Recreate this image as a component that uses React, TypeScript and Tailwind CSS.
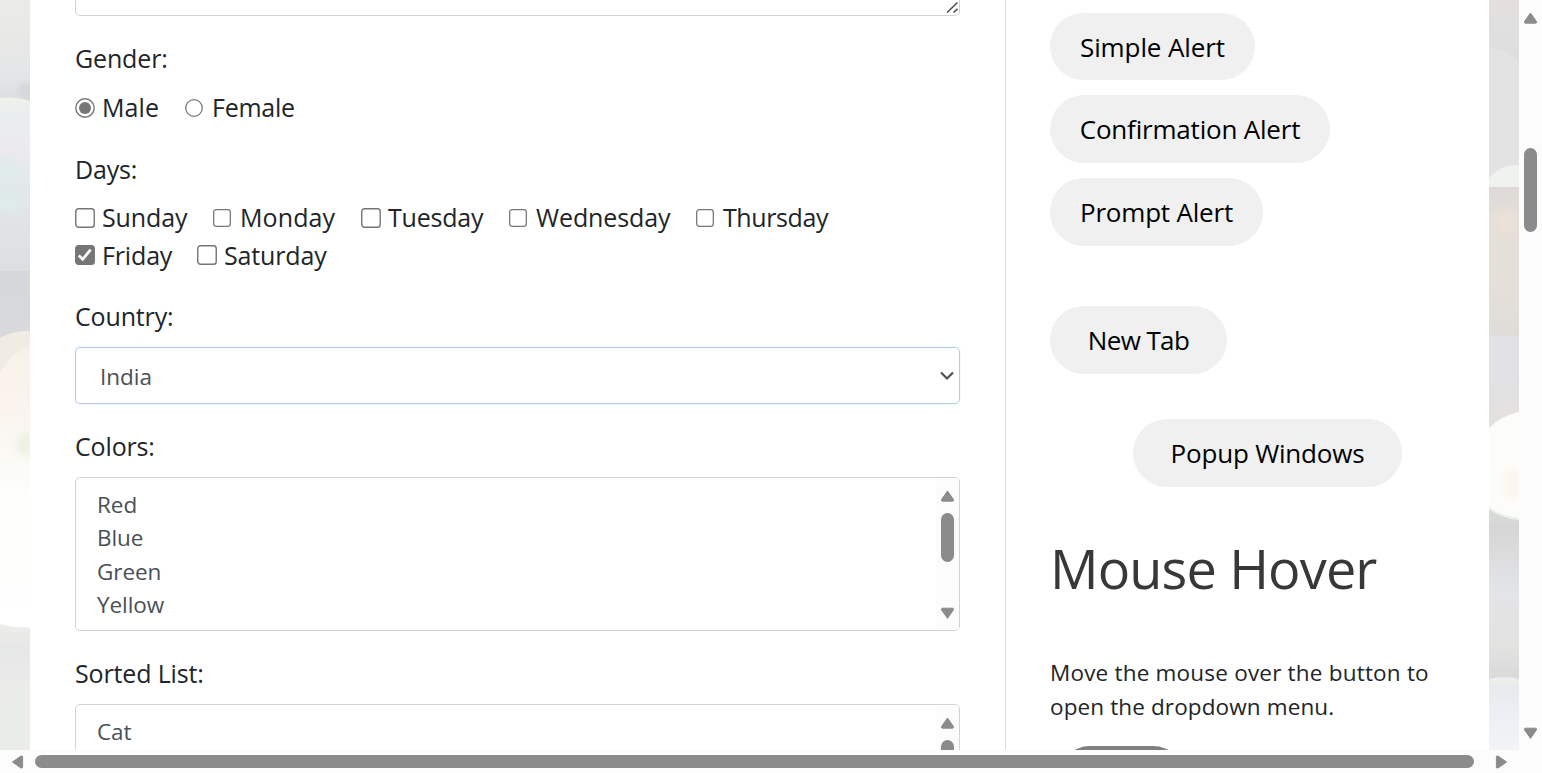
import React from "react";

const arrowPaths = {
  up: "M8 3 L14 11.6 Q14.4 13.2 13 13.2 H3 Q1.6 13.2 2 11.6 Z",
  down: "M8 13.4 L2 4.8 Q1.6 3.2 3 3.2 H13 Q14.4 3.2 14 4.8 Z",
  left: "M3.4 8 L12 2 Q13.6 1.6 13.6 3 V13 Q13.6 14.4 12 14 Z",
  right: "M13.6 8 L5 2 Q3.4 1.6 3.4 3 V13 Q3.4 14.4 5 14 Z",
};

function Arrow({ dir, className = "" }: { dir: keyof typeof arrowPaths; className?: string }) {
  return (
    <svg viewBox="0 0 16 16" className={`block h-4 w-4 shrink-0 ${className}`} fill="#8b8b8b">
      <path d={arrowPaths[dir]} stroke="#8b8b8b" strokeWidth="1" strokeLinejoin="round" />
    </svg>
  );
}

function Box({ size, checked = false }: { size: number; checked?: boolean }) {
  return (
    <svg width={size} height={size} viewBox="0 0 20 20" className="mb-px block shrink-0">
      <rect x="0.75" y="0.75" width="18.5" height="18.5" rx="2.8" fill={checked ? "#767676" : "#fff"} stroke="#767676" strokeWidth="1.4" />
      {checked && <path d="M3.8 10.6 L7.7 14.3 L15.6 4.6" fill="none" stroke="#fff" strokeWidth="2.7" />}
    </svg>
  );
}

function Radio({ size, checked = false }: { size: number; checked?: boolean }) {
  return (
    <svg width={size} height={size} viewBox="0 0 20 20" className="mb-px block shrink-0">
      <circle cx="10" cy="10" r="9.2" fill="#fff" stroke="#767676" strokeWidth="1.4" />
      {checked && <circle cx="10" cy="10" r="6" fill="#767676" />}
    </svg>
  );
}

function Choice({ label, width, text = "tracking-[-0.1px]", control }: { label: string; width: string; text?: string; control: React.ReactNode }) {
  return (
    <label className={`flex h-[38px] shrink-0 items-center whitespace-nowrap ${width}`}>
      <span className="flex w-[27px] shrink-0">{control}</span>
      <span className={text}>{label}</span>
    </label>
  );
}

function FieldLabel({ children, className }: { children: React.ReactNode; className: string }) {
  return <div className={`h-[38px] shrink-0 leading-[38px] tracking-[-0.15px] ${className}`}>{children}</div>;
}

function ListBox({ items }: { items: string[] }) {
  return (
    <div className="mt-[12px] flex h-[154px] w-[885px] shrink-0 overflow-hidden rounded-[5px] border border-[#ced4da]">
      <div className="flex-1 overflow-hidden pl-[21px] pt-[10px] text-[22.5px] tracking-[-0.05px] text-[#495057]">
        {items.map((item, i) => (
          <div key={i} className="h-[33.3px] leading-[33.3px]">{item}</div>
        ))}
      </div>
      <div className="flex w-[23px] flex-col items-center bg-[#fcfcfc] pt-[10px]">
        <Arrow dir="up" className="-translate-x-[0.5px]" />
        <div className="mr-px mt-[9px] h-[49px] w-[13px] shrink-0 rounded-full bg-[#8b8b8b]" />
        <Arrow dir="down" className="mt-[43px] -translate-x-[0.5px]" />
      </div>
    </div>
  );
}

function Pill({ label, className }: { label: string; className: string }) {
  return (
    <button className={`flex shrink-0 items-center justify-center whitespace-nowrap rounded-full bg-[#f0f0f0] text-[26px] text-black ${className}`}>
      {label}
    </button>
  );
}

function LeftBackdrop() {
  return (
    <svg viewBox="0 0 30 750" className="block h-[750px] w-[30px] shrink-0">
      <defs>
        <linearGradient id="leftTop" x1="0" y1="0" x2="0" y2="1">
          <stop offset="0" stopColor="#ebece8" />
          <stop offset="0.35" stopColor="#e8e9e6" />
          <stop offset="0.7" stopColor="#e4e5e8" />
          <stop offset="1" stopColor="#d8dcdc" />
        </linearGradient>
        <linearGradient id="leftPearl" x1="0" y1="0" x2="0" y2="1">
          <stop offset="0" stopColor="#eef0ea" />
          <stop offset="0.08" stopColor="#e9eeee" />
          <stop offset="0.3" stopColor="#ebeaec" />
          <stop offset="0.5" stopColor="#e2e9ea" />
          <stop offset="0.75" stopColor="#e0e3e6" />
          <stop offset="1" stopColor="#dddee1" />
        </linearGradient>
        <linearGradient id="leftGrey" x1="0" y1="0" x2="0" y2="1">
          <stop offset="0" stopColor="#d5d7d8" />
          <stop offset="1" stopColor="#dadadd" />
        </linearGradient>
        <linearGradient id="leftCream" x1="0" y1="0" x2="0" y2="1">
          <stop offset="0" stopColor="#f0ebe3" />
          <stop offset="0.1" stopColor="#f8f2eb" />
          <stop offset="0.25" stopColor="#fbf4ee" />
          <stop offset="0.4" stopColor="#faf9f4" />
          <stop offset="0.55" stopColor="#fefefc" />
          <stop offset="1" stopColor="#ffffff" />
        </linearGradient>
        <linearGradient id="leftBottom" x1="0" y1="0" x2="0" y2="1">
          <stop offset="0" stopColor="#eceeea" />
          <stop offset="0.2" stopColor="#e6e7e7" />
          <stop offset="0.6" stopColor="#ececea" />
          <stop offset="1" stopColor="#e8eae5" />
        </linearGradient>
        <filter id="soft" x="-50%" y="-50%" width="200%" height="200%"><feGaussianBlur stdDeviation="3" /></filter>
      </defs>
      <rect width="30" height="110" fill="url(#leftTop)" />
      <ellipse cx="27" cy="91" rx="9" ry="8" fill="#d2d7d7" filter="url(#soft)" />
      <path d="M0 99 Q15 97 30 102 V272 H0Z" fill="url(#leftPearl)" />
      <path d="M0 99 Q15 97 30 102" fill="none" stroke="#f0f3ea" strokeWidth="2" />
      <ellipse cx="6" cy="170" rx="10" ry="12" fill="#deebea" filter="url(#soft)" />
      <ellipse cx="9" cy="202" rx="14" ry="11" fill="#dfeaea" filter="url(#soft)" />
      <rect y="271" width="30" height="80" fill="url(#leftGrey)" />
      <path d="M0 338 Q15 330 30 331 V632 H0Z" fill="url(#leftCream)" />
      <path d="M0 372 Q10 355 30 343 V331 Q15 330 0 338Z" fill="#f1ece3" />
      <ellipse cx="26" cy="444" rx="10" ry="11" fill="#eef1e3" filter="url(#soft)" />
      <path d="M0 624 Q14 628 30 627 V750 H0Z" fill="url(#leftBottom)" />
      <path d="M0 704 L30 676 V750 H0Z" fill="#eaece7" />
    </svg>
  );
}

function RightBackdrop() {
  return (
    <svg viewBox="0 0 30 750" className="block h-[750px] w-[30px] shrink-0">
      <defs>
        <linearGradient id="rightTop" x1="0" y1="0" x2="0" y2="1">
          <stop offset="0" stopColor="#e5dfdc" />
          <stop offset="0.12" stopColor="#dfe0df" />
          <stop offset="0.3" stopColor="#dededf" />
          <stop offset="1" stopColor="#e2e2e2" />
        </linearGradient>
        <linearGradient id="rightWarm" x1="0" y1="0" x2="0" y2="1">
          <stop offset="0" stopColor="#dcd9d7" />
          <stop offset="0.2" stopColor="#e6dfd9" />
          <stop offset="0.7" stopColor="#e4dfd8" />
          <stop offset="1" stopColor="#dfdcd9" />
        </linearGradient>
        <linearGradient id="rightCool" x1="0" y1="0" x2="0" y2="1">
          <stop offset="0" stopColor="#e2e2e6" />
          <stop offset="0.35" stopColor="#e2e1e4" />
          <stop offset="1" stopColor="#e4e2dc" />
        </linearGradient>
        <linearGradient id="rightGrey" x1="0" y1="0" x2="0" y2="1">
          <stop offset="0" stopColor="#dce2dc" />
          <stop offset="0.15" stopColor="#d6d6d6" />
          <stop offset="0.5" stopColor="#e3e4e6" />
          <stop offset="0.8" stopColor="#e3e3e2" />
          <stop offset="1" stopColor="#d9d9d9" />
        </linearGradient>
        <linearGradient id="rightBottom" x1="0" y1="0" x2="0" y2="1">
          <stop offset="0" stopColor="#eeefea" />
          <stop offset="0.15" stopColor="#e8ebed" />
          <stop offset="0.6" stopColor="#edf0f6" />
          <stop offset="1" stopColor="#f3f3f2" />
        </linearGradient>
        <filter id="softRight" x="-50%" y="-50%" width="200%" height="200%"><feGaussianBlur stdDeviation="3" /></filter>
      </defs>
      <rect width="30" height="187" fill="url(#rightTop)" />
      <path d="M0 48 Q18 49 30 62 V187 H0Z" fill="#e3e3e3" />
      <path d="M0 178 Q12 164 30 165 V187 H0Z" fill="#f0f2ef" />
      <rect y="187" width="30" height="150" fill="url(#rightWarm)" />
      <ellipse cx="18" cy="222" rx="12" ry="12" fill="#eae1d7" filter="url(#softRight)" />
      <rect y="336" width="30" height="110" fill="url(#rightCool)" />
      <rect y="500" width="30" height="180" fill="url(#rightGrey)" />
      <path d="M0 428 Q13 415 30 412 V518 Q12 516 0 507Z" fill="#fcfcf9" />
      <ellipse cx="23" cy="484" rx="8" ry="16" fill="#fdf6ee" filter="url(#softRight)" />
      <path d="M0 508 Q12 517 30 519" fill="none" stroke="#edf4eb" strokeWidth="2" />
      <path d="M0 679 Q15 675 30 679 V750 H0Z" fill="url(#rightBottom)" />
    </svg>
  );
}

export default function App() {
  return (
    <div className="flex h-[773px] w-[1542px] flex-col overflow-hidden bg-[#fcfcfc] font-['Open_Sans','Noto_Sans',sans-serif] text-[25px] text-[#212529]">
      <div className="flex h-[750px] shrink-0 overflow-hidden">
        <LeftBackdrop />
        <main className="flex w-[976px] shrink-0 flex-col overflow-hidden border-r border-[#dcdddf] bg-white pl-[45px]">
          <div className="flex h-4 w-[885px] shrink-0 items-end justify-end rounded-b-[5px] border border-t-0 border-[#ced4da]">
            <svg width="14" height="14" viewBox="0 0 14 14" className="block"><path d="M2 11.5 L12.5 1.5 M8.5 11.5 L12.5 7.8" stroke="#505050" strokeWidth="1.6" /></svg>
          </div>
          <FieldLabel className="mt-[23px]">Gender:</FieldLabel>
          <div className="mt-[12px] flex shrink-0">
            <Choice label="Male" width="w-[110px]" text="tracking-[0.1px]" control={<Radio size={20} checked />} />
            <Choice label="Female" width="w-[120px]" text="tracking-[-0.25px]" control={<Radio size={18} />} />
          </div>
          <FieldLabel className="mt-[23px]">Days:</FieldLabel>
          <div className="mt-[11px] flex shrink-0">
            <Choice label="Sunday" width="w-[138px]" control={<Box size={20} />} />
            <Choice label="Monday" width="w-[148px]" text="tracking-[0.1px]" control={<Box size={18} />} />
            <Choice label="Tuesday" width="w-[148px]" text="tracking-[-0.2px]" control={<Box size={20} />} />
            <Choice label="Wednesday" width="w-[187px]" control={<Box size={18} />} />
            <Choice label="Thursday" width="w-[150px]" text="tracking-[-0.4px]" control={<Box size={18} />} />
          </div>
          <div className="flex shrink-0">
            <Choice label="Friday" width="w-[122px]" text="tracking-[-0.15px]" control={<span className="-mt-px"><Box size={20} checked /></span>} />
            <Choice label="Saturday" width="w-[148px]" text="tracking-[-0.15px]" control={<span className="-mt-px"><Box size={20} /></span>} />
          </div>
          <FieldLabel className="mt-[22px]">Country:</FieldLabel>
          <div className="mt-[12px] flex h-[57px] w-[885px] shrink-0 items-center justify-between rounded-[5px] border border-[#b5cce6] pl-[24px] pr-[5px] pt-[2px] text-[22.5px] text-[#495057] shadow-[0_0_2px_#d5e6fa]">
            <span>India</span>
            <svg width="14" height="10" viewBox="0 0 14 10" className="mb-px block"><path d="M1 1.5 L7 7.5 L13 1.5" fill="none" stroke="#495057" strokeWidth="2.2" /></svg>
          </div>
          <FieldLabel className="mt-[23px]">Colors:</FieldLabel>
          <ListBox items={["Red", "Blue", "Green", "Yellow", "Red"]} />
          <FieldLabel className="mt-[23px]">Sorted List:</FieldLabel>
          <ListBox items={["Cat"]} />
        </main>
        <aside className="flex w-[483px] shrink-0 flex-col items-start overflow-hidden bg-white pl-[44px] pt-[13px]">
          <Pill label="Simple Alert" className="h-[67px] w-[205px] pt-px tracking-[-0.1px]" />
          <Pill label="Confirmation Alert" className="mt-[15px] h-[68px] w-[280px] tracking-[-0.2px]" />
          <Pill label="Prompt Alert" className="mt-[15px] h-[68px] w-[213px] tracking-[-0.2px]" />
          <Pill label="New Tab" className="mt-[60px] h-[68px] w-[177px] tracking-[-0.6px]" />
          <Pill label="Popup Windows" className="ml-[83px] mt-[45px] h-[68px] w-[269px] tracking-[-0.2px]" />
          <h2 className="mt-[45px] h-[72px] shrink-0 whitespace-nowrap text-[54px] leading-[72px] tracking-[-0.85px] text-[#383838]">Mouse Hover</h2>
          <p className="mt-[52px] shrink-0 whitespace-nowrap text-[22.5px] leading-[34px] tracking-[0.2px]">Move the mouse over the button to<br /><span className="tracking-[0.12px]">open the dropdown menu.</span></p>
          <div className="ml-[8px] mt-[22px] h-[64px] w-[127px] shrink-0 rounded-full bg-[#808080]" />
        </aside>
        <RightBackdrop />
        <div className="flex w-[23px] shrink-0 flex-col items-center pt-[10px]">
          <Arrow dir="up" className="-translate-x-[0.5px]" />
          <div className="mt-[122px] h-[84px] w-[13px] rounded-full bg-[#8b8b8b]" />
          <Arrow dir="down" className="mt-[493px] -translate-x-[0.5px]" />
        </div>
      </div>
      <div className="flex h-[23px] items-center pl-[9px]">
        <Arrow dir="left" />
        <div className="ml-[10px] h-[13px] w-[1439px] rounded-full bg-[#8b8b8b]" />
        <Arrow dir="right" className="ml-[19px]" />
      </div>
    </div>
  );
}
